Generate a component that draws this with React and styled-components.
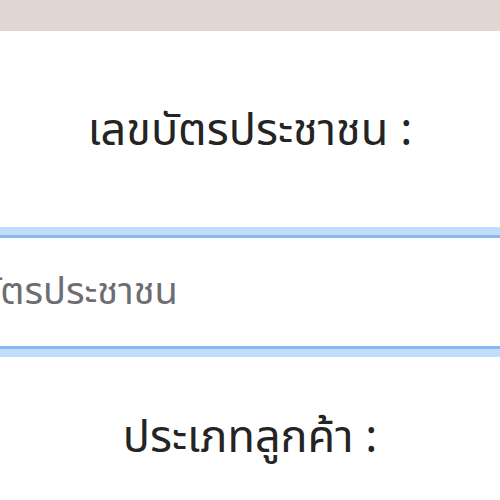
import React from "react";
import styled, { createGlobalStyle } from "styled-components";

const GlobalStyle = createGlobalStyle`
  html, body {
    margin: 0;
    padding: 0;
    width: 500px;
    height: 500px;
    overflow: hidden;
    background: #e2d6d2;
    font-family: "Noto Sans Thai", "Noto Sans", "Liberation Sans", sans-serif;
  }
`;

const Page = styled.div`
  width: 500px;
  height: 500px;
  display: flex;
  flex-direction: column;
  overflow: hidden;
`;

const TopBand = styled.div`
  height: 31px;
  flex-shrink: 0;
  background: #e2d6d2;
`;

const Card = styled.div`
  flex: 1;
  background: #ffffff;
  display: flex;
  flex-direction: column;
  align-items: center;
`;

const Label = styled.div`
  font-size: 45px;
  color: #242424;
  text-align: center;
  line-height: 1;
  white-space: nowrap;
  margin-top: ${(p) => p.$top}px;
`;

const InputRow = styled.div`
  align-self: stretch;
  margin: 0 -40px 0 -99px;
  margin-top: ${(p) => p.$top}px;
`;

const Input = styled.input`
  width: 100%;
  box-sizing: border-box;
  height: 114px;
  border: 3px solid #8cb8ec;
  box-shadow: 0 0 0 8px #c0ddfc;
  outline: none;
  padding: 0 20px 0 20px;
  font-family: inherit;
  font-size: 38px;
  color: #242424;
  background: #ffffff;
  &::placeholder {
    color: #6d6d72;
  }
`;

export default function App() {
  return (
    <>
      <GlobalStyle />
      <Page>
        <TopBand />
        <Card>
          <Label $top={78}>เลขบัตรประชาชน :</Label>
          <InputRow $top={81}>
            <Input type="text" placeholder="เลขบัตรประชาชน" />
          </InputRow>
          <Label $top={67}>ประเภทลูกค้า :</Label>
        </Card>
      </Page>
    </>
  );
}
